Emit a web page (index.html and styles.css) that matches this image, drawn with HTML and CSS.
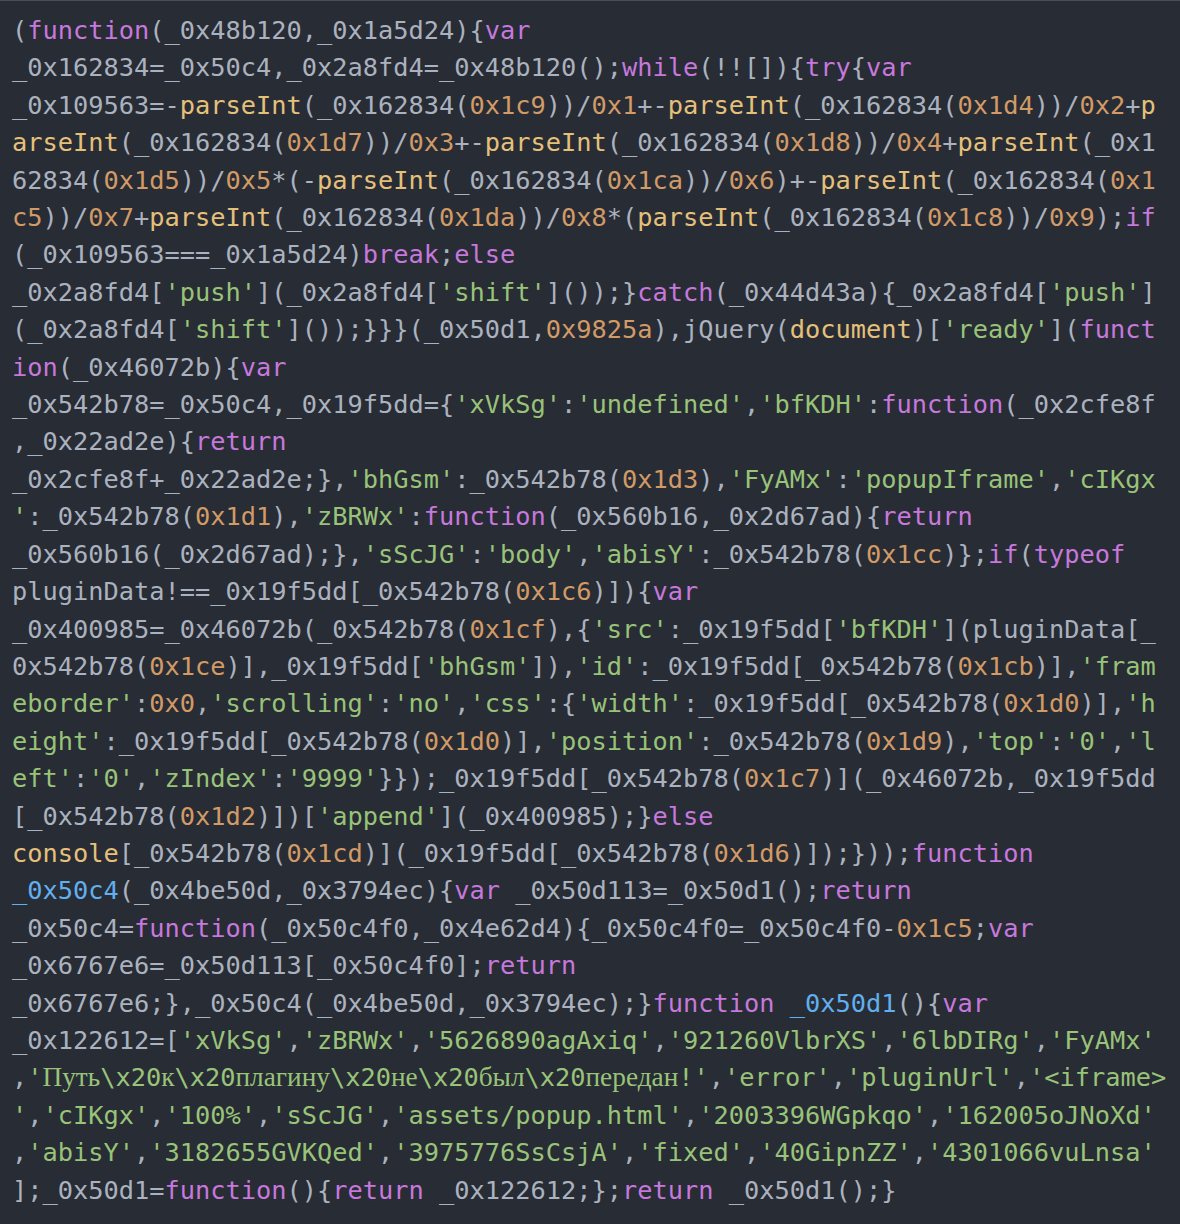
FILE: index.html
```html
<!DOCTYPE html>
<html lang="en">
<head>
<meta charset="utf-8">
<title>Code</title>
<link rel="stylesheet" href="styles.css">
</head>
<body>
<div class="code">
<div class="ln">(<span class="k">function</span>(_0x48b120,_0x1a5d24){<span class="k">var</span></div>
<div class="ln">_0x162834=_0x50c4,_0x2a8fd4=_0x48b120();<span class="k">while</span>(!![]){<span class="k">try</span>{<span class="k">var</span></div>
<div class="ln">_0x109563=-<span class="y">parseInt</span>(_0x162834(<span class="n">0x1c9</span>))/<span class="n">0x1</span>+-<span class="y">parseInt</span>(_0x162834(<span class="n">0x1d4</span>))/<span class="n">0x2</span>+<span class="y">p</span></div>
<div class="ln"><span class="y">arseInt</span>(_0x162834(<span class="n">0x1d7</span>))/<span class="n">0x3</span>+-<span class="y">parseInt</span>(_0x162834(<span class="n">0x1d8</span>))/<span class="n">0x4</span>+<span class="y">parseInt</span>(_0x1</div>
<div class="ln">62834(<span class="n">0x1d5</span>))/<span class="n">0x5</span>*(-<span class="y">parseInt</span>(_0x162834(<span class="n">0x1ca</span>))/<span class="n">0x6</span>)+-<span class="y">parseInt</span>(_0x162834(<span class="n">0x1</span></div>
<div class="ln"><span class="n">c5</span>))/<span class="n">0x7</span>+<span class="y">parseInt</span>(_0x162834(<span class="n">0x1da</span>))/<span class="n">0x8</span>*(<span class="y">parseInt</span>(_0x162834(<span class="n">0x1c8</span>))/<span class="n">0x9</span>);<span class="k">if</span></div>
<div class="ln">(_0x109563===_0x1a5d24)<span class="k">break</span>;<span class="k">else</span></div>
<div class="ln">_0x2a8fd4[<span class="s">'push'</span>](_0x2a8fd4[<span class="s">'shift'</span>]());}<span class="k">catch</span>(_0x44d43a){_0x2a8fd4[<span class="s">'push'</span>]</div>
<div class="ln">(_0x2a8fd4[<span class="s">'shift'</span>]());}}}(_0x50d1,<span class="n">0x9825a</span>),jQuery(<span class="y">document</span>)[<span class="s">'ready'</span>](<span class="k">funct</span></div>
<div class="ln"><span class="k">ion</span>(_0x46072b){<span class="k">var</span></div>
<div class="ln">_0x542b78=_0x50c4,_0x19f5dd={<span class="s">'xVkSg'</span>:<span class="s">'undefined'</span>,<span class="s">'bfKDH'</span>:<span class="k">function</span>(_0x2cfe8f</div>
<div class="ln">,_0x22ad2e){<span class="k">return</span></div>
<div class="ln">_0x2cfe8f+_0x22ad2e;},<span class="s">'bhGsm'</span>:_0x542b78(<span class="n">0x1d3</span>),<span class="s">'FyAMx'</span>:<span class="s">'popupIframe'</span>,<span class="s">'cIKgx</span></div>
<div class="ln"><span class="s">'</span>:_0x542b78(<span class="n">0x1d1</span>),<span class="s">'zBRWx'</span>:<span class="k">function</span>(_0x560b16,_0x2d67ad){<span class="k">return</span></div>
<div class="ln">_0x560b16(_0x2d67ad);},<span class="s">'sScJG'</span>:<span class="s">'body'</span>,<span class="s">'abisY'</span>:_0x542b78(<span class="n">0x1cc</span>)};<span class="k">if</span>(<span class="k">typeof</span></div>
<div class="ln">pluginData!==_0x19f5dd[_0x542b78(<span class="n">0x1c6</span>)]){<span class="k">var</span></div>
<div class="ln">_0x400985=_0x46072b(_0x542b78(<span class="n">0x1cf</span>),{<span class="s">'src'</span>:_0x19f5dd[<span class="s">'bfKDH'</span>](pluginData[_</div>
<div class="ln">0x542b78(<span class="n">0x1ce</span>)],_0x19f5dd[<span class="s">'bhGsm'</span>]),<span class="s">'id'</span>:_0x19f5dd[_0x542b78(<span class="n">0x1cb</span>)],<span class="s">'fram</span></div>
<div class="ln"><span class="s">eborder'</span>:<span class="n">0x0</span>,<span class="s">'scrolling'</span>:<span class="s">'no'</span>,<span class="s">'css'</span>:{<span class="s">'width'</span>:_0x19f5dd[_0x542b78(<span class="n">0x1d0</span>)],<span class="s">'h</span></div>
<div class="ln"><span class="s">eight'</span>:_0x19f5dd[_0x542b78(<span class="n">0x1d0</span>)],<span class="s">'position'</span>:_0x542b78(<span class="n">0x1d9</span>),<span class="s">'top'</span>:<span class="s">'0'</span>,<span class="s">'l</span></div>
<div class="ln"><span class="s">eft'</span>:<span class="s">'0'</span>,<span class="s">'zIndex'</span>:<span class="s">'9999'</span>}});_0x19f5dd[_0x542b78(<span class="n">0x1c7</span>)](_0x46072b,_0x19f5dd</div>
<div class="ln">[_0x542b78(<span class="n">0x1d2</span>)])[<span class="s">'append'</span>](_0x400985);}<span class="k">else</span></div>
<div class="ln"><span class="y">console</span>[_0x542b78(<span class="n">0x1cd</span>)](_0x19f5dd[_0x542b78(<span class="n">0x1d6</span>)]);}));<span class="k">function</span></div>
<div class="ln"><span class="b">_0x50c4</span>(_0x4be50d,_0x3794ec){<span class="k">var</span> _0x50d113=_0x50d1();<span class="k">return</span></div>
<div class="ln">_0x50c4=<span class="k">function</span>(_0x50c4f0,_0x4e62d4){_0x50c4f0=_0x50c4f0-<span class="n">0x1c5</span>;<span class="k">var</span></div>
<div class="ln">_0x6767e6=_0x50d113[_0x50c4f0];<span class="k">return</span></div>
<div class="ln">_0x6767e6;},_0x50c4(_0x4be50d,_0x3794ec);}<span class="k">function</span> <span class="b">_0x50d1</span>(){<span class="k">var</span></div>
<div class="ln">_0x122612=[<span class="s">'xVkSg'</span>,<span class="s">'zBRWx'</span>,<span class="s">'5626890agAxiq'</span>,<span class="s">'921260VlbrXS'</span>,<span class="s">'6lbDIRg'</span>,<span class="s">'FyAMx'</span></div>
<div class="ln">,<span class="s">'<span class="cy">Путь</span>\x20<span class="cy">к</span>\x20<span class="cy">плагину</span>\x20<span class="cy">не</span>\x20<span class="cy">был</span>\x20<span class="cy">передан</span>!'</span>,<span class="s">'error'</span>,<span class="s">'pluginUrl'</span>,<span class="s">'&lt;iframe&gt;</span></div>
<div class="ln"><span class="s">'</span>,<span class="s">'cIKgx'</span>,<span class="s">'100%'</span>,<span class="s">'sScJG'</span>,<span class="s">'assets/popup.html'</span>,<span class="s">'2003396WGpkqo'</span>,<span class="s">'162005oJNoXd'</span></div>
<div class="ln">,<span class="s">'abisY'</span>,<span class="s">'3182655GVKQed'</span>,<span class="s">'3975776SsCsjA'</span>,<span class="s">'fixed'</span>,<span class="s">'40GipnZZ'</span>,<span class="s">'4301066vuLnsa'</span></div>
<div class="ln">];_0x50d1=<span class="k">function</span>(){<span class="k">return</span> _0x122612;};<span class="k">return</span> _0x50d1();}</div>
</div>
</body>
</html>
```

FILE: styles.css
```css
html, body {
  margin: 0;
  padding: 0;
  background: #282c34;
}

body {
  width: 1180px;
  height: 1224px;
  overflow: hidden;
}

.code {
  box-sizing: border-box;
  height: 1224px;
  border-top: 1px solid #4a4e57;
  padding: 11px 0 0 12px;
  background: #282c34;
  color: #abb2bf;
  font-family: "DejaVu Sans Mono", "Liberation Mono", monospace;
  font-size: 25.33px;
  line-height: 37.42px;
}

.ln {
  white-space: pre;
  height: 37.42px;
}

.k { color: #c678dd; }
.n { color: #d19a66; }
.s { color: #98c379; }
.y { color: #e5c07b; }
.b { color: #61afef; }

.cy {
  font-family: "Liberation Serif", "DejaVu Serif", serif;
  font-size: 27.3px;
}
```
